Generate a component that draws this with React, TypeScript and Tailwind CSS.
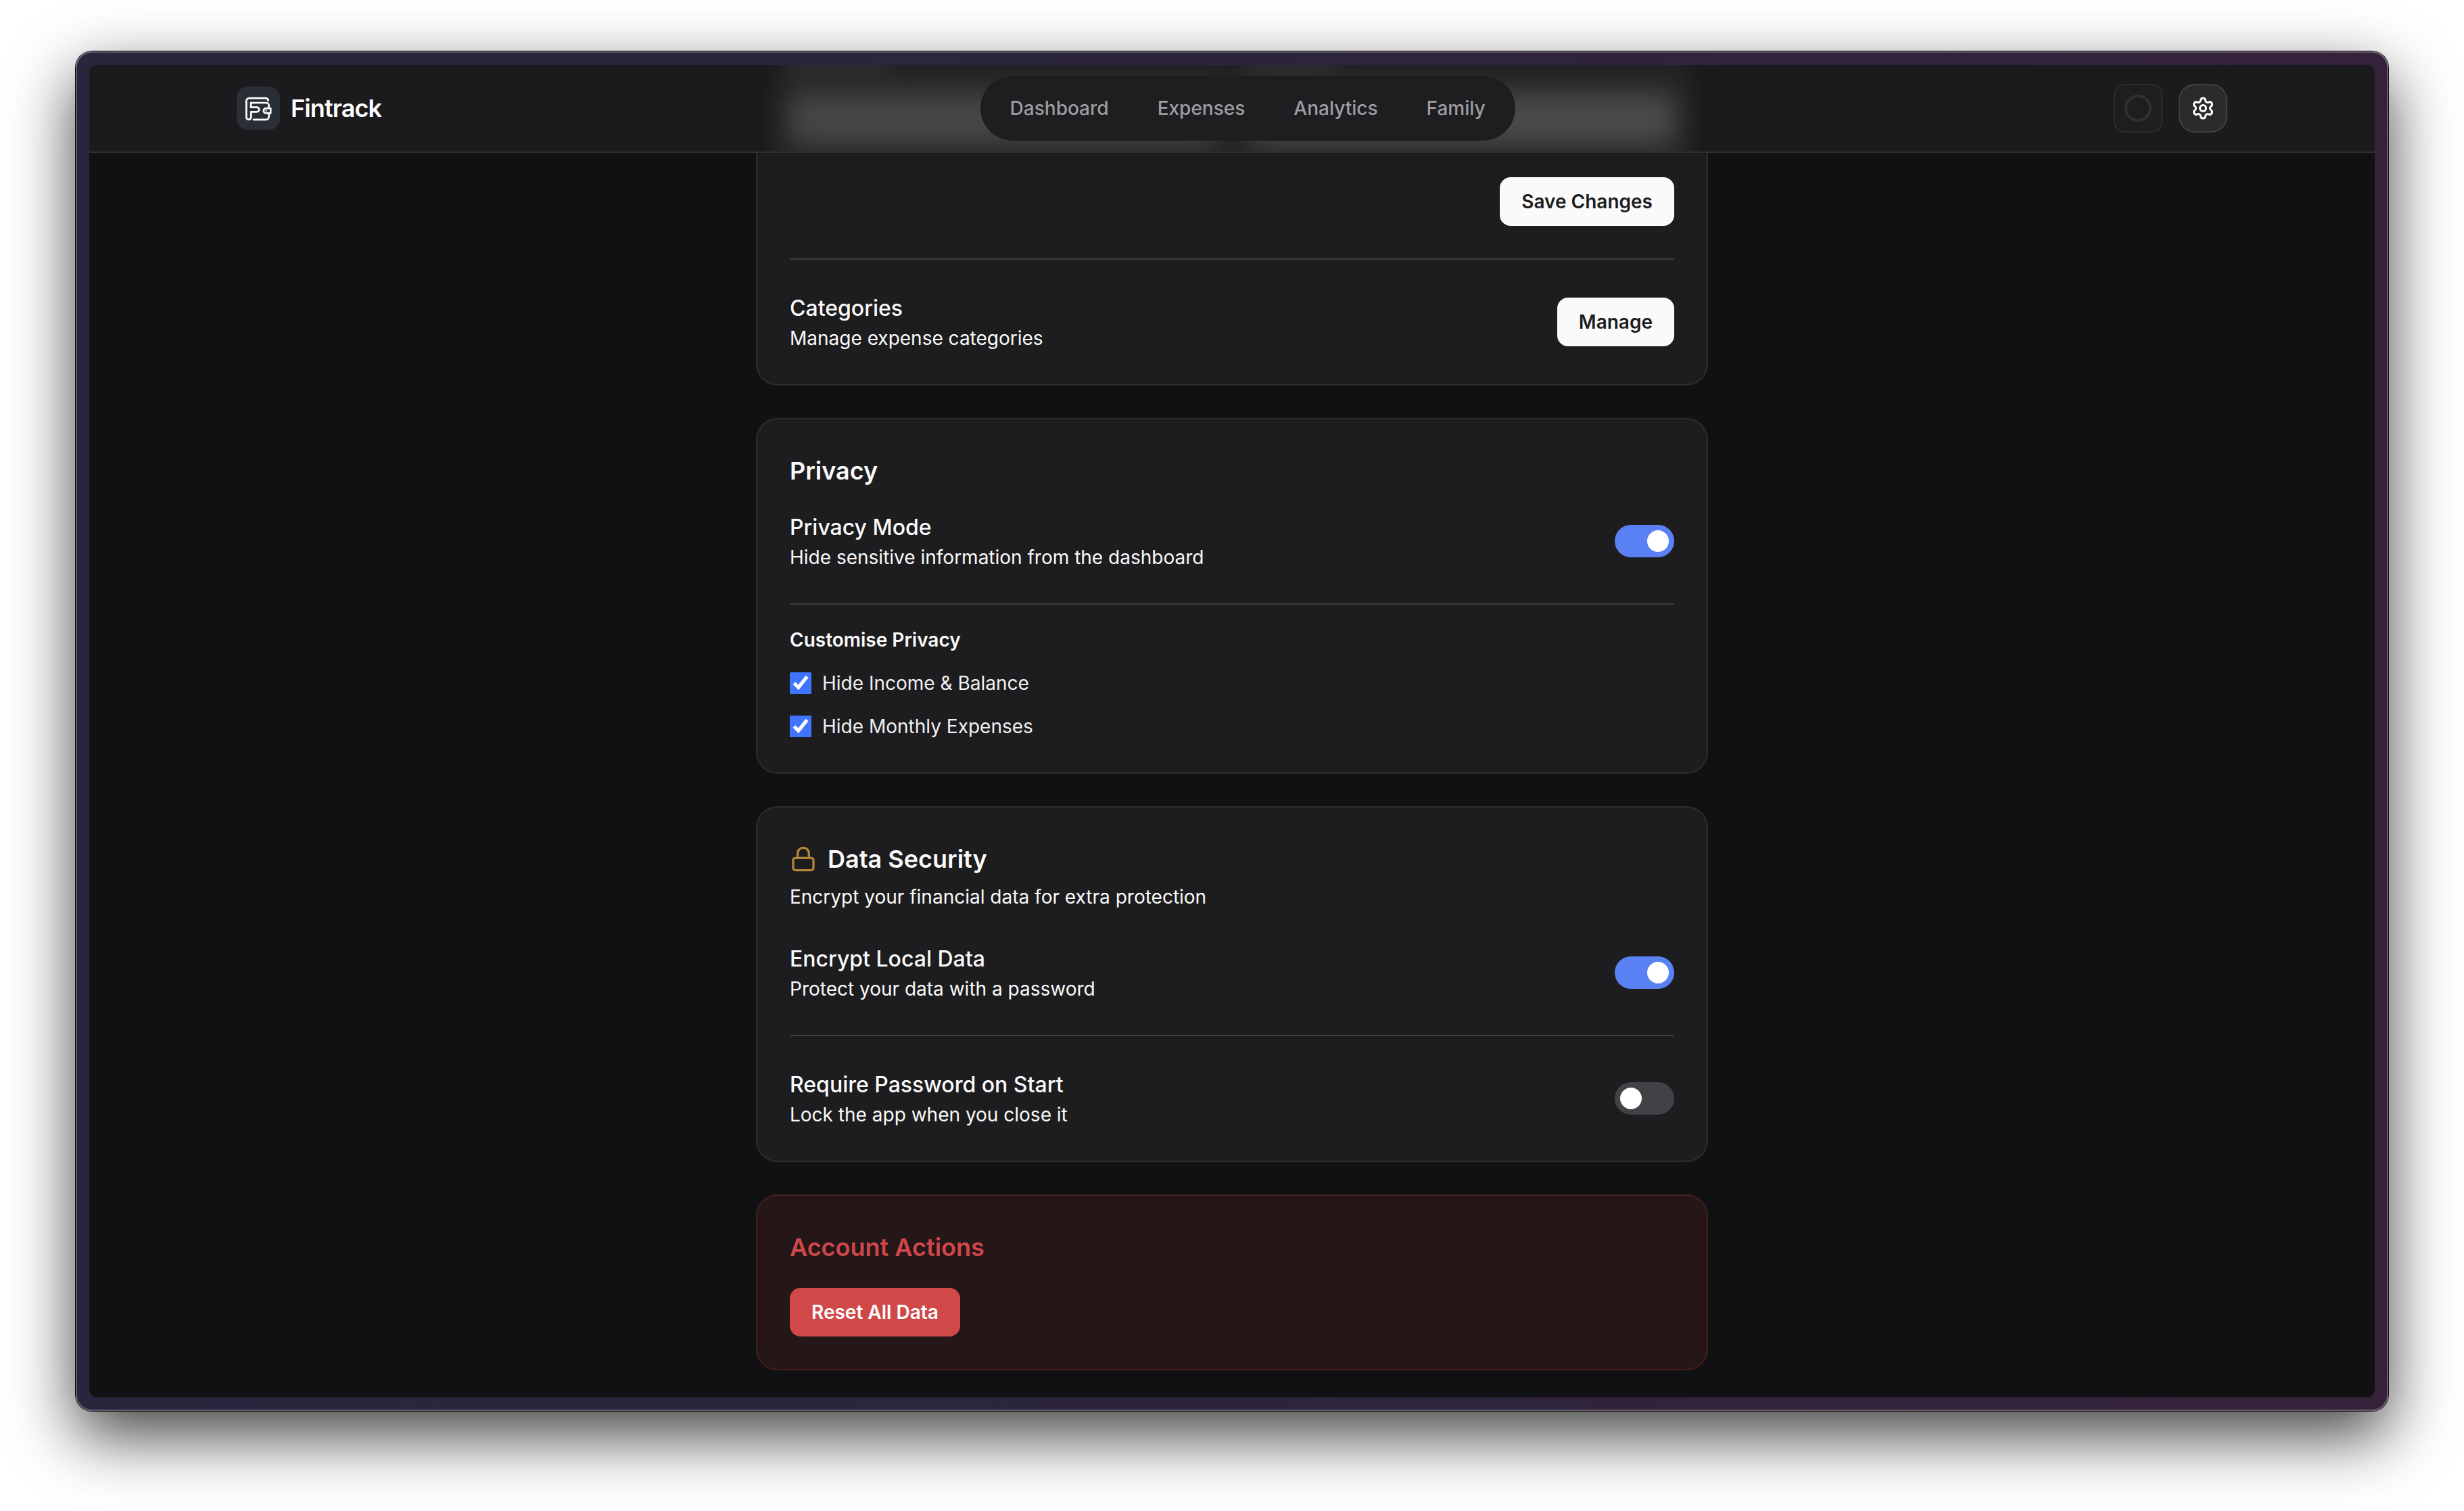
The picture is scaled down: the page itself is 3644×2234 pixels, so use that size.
import { ReactNode, useId, useState } from "react";
import clsx from "clsx";
import { Lock, Settings } from "lucide-react";

const NAV_LINKS = [
  { label: "Dashboard", href: "#dashboard" },
  { label: "Expenses", href: "#expenses" },
  { label: "Analytics", href: "#analytics" },
  { label: "Family", href: "#family" },
];

function Logo() {
  return (
    <svg
      viewBox="0 0 64 64"
      className="size-16 shrink-0 rounded-2xl bg-[#2a2f35]"
      fill="none"
      stroke="#fff"
      strokeWidth="2.7"
      strokeLinecap="round"
      strokeLinejoin="round"
      aria-hidden="true"
    >
      {/* wallet back and F stem */}
      <path d="M46.6 21v-.4a3.4 3.4 0 0 0-3.4-3.4H18.3a4 4 0 0 0-4 4V45.200a3.500 3.500 0 0 0 7 0V37.300H30a3.300 3.300 0 0 0 0-6.600H21V24H43.600a4 4 0 0 1 4 4V31.500" />
      <path d="M47.6 39.5v5.3a4 4 0 0 1-4 4H25" />
      {/* clasp */}
      <path d="M50.2 32.2H43.4a3.600 3.600 0 0 0 0 7.200H50.200Z" />
      <circle cx="43.7" cy="35.8" r="1.2" fill="#fff" stroke="none" />
    </svg>
  );
}

function Header() {
  return (
    <header className="relative isolate overflow-hidden border-b-2 border-white/9 bg-[#1b1b1d]">
      {/* form fields scrolled under the translucent bar */}
      <div className="absolute inset-0 -z-10 flex justify-center" aria-hidden="true">
        <div className="relative w-full max-w-[1408px]">
          <div className="absolute -inset-y-10 inset-x-6 bg-[#222224] blur-lg" />
          <div className="absolute inset-x-12 -top-4 flex gap-12 blur-lg">
            <div className="flex-1">
              <div className="h-8 w-36 bg-[#303032]" />
            </div>
            <div className="flex-1">
              <div className="h-8 w-32 bg-[#303032]" />
            </div>
          </div>
          <div className="absolute inset-x-12 top-10 bottom-2 flex gap-12 blur-[20px]">
            <div className="flex-1 bg-[#474749]" />
            <div className="flex-1 bg-[#4b4b4d]" />
          </div>
        </div>
      </div>

      <div className="mx-auto flex h-32 w-full max-w-[3072px] items-center justify-between px-16">
        <a href="#home" className="flex items-center gap-4">
          <Logo />
          <span className="text-4xl font-semibold tracking-tight text-white">Fintrack</span>
        </a>

        <nav className="flex gap-2 rounded-full bg-[#1e1e21] p-3">
          {NAV_LINKS.map((link) => (
            <a
              key={link.label}
              href={link.href}
              className="rounded-full px-8 py-4 text-[28px] leading-10 font-medium text-[#9d9da1]"
            >
              {link.label}
            </a>
          ))}
        </nav>

        <div className="flex items-center gap-6">
          <button
            type="button"
            aria-label="Account"
            className="flex size-18 items-center justify-center rounded-2xl border-2 border-[#2d2d2f] bg-[#1e1e20]"
          >
            <span className="size-10 rounded-full border-4 border-[#303032]" />
          </button>
          <button
            type="button"
            aria-label="Settings"
            className="flex size-18 items-center justify-center rounded-3xl border-2 border-[#404042] bg-[#2b2b2d] text-white"
          >
            <Settings className="size-9" />
          </button>
        </div>
      </div>
    </header>
  );
}

function Card({ children, className }: { children: ReactNode; className?: string }) {
  return (
    <section className={clsx("border-2 px-12 pb-12", className)}>{children}</section>
  );
}

const CARD = "rounded-4xl border-[#2d2d2f] bg-[#1d1d1f] pt-12";

function Divider() {
  return <hr className="border-t-2 border-[#3e3e40]" />;
}

function Button({ children, danger = false }: { children: ReactNode; danger?: boolean }) {
  return (
    <button
      type="button"
      className={clsx(
        "rounded-2xl px-8 py-4 text-[28px] leading-10 font-semibold",
        danger ? "bg-[#d04848] text-white" : "bg-[#fafafa] text-[#1c1c1e]"
      )}
    >
      {children}
    </button>
  );
}

function SwitchRow({
  title,
  description,
  defaultOn = false,
}: {
  title: string;
  description: string;
  defaultOn?: boolean;
}) {
  const id = useId();
  const [on, setOn] = useState(defaultOn);

  return (
    <div className="flex items-center justify-between">
      <div>
        <label htmlFor={id} className="block text-[32px] leading-12 font-medium">
          {title}
        </label>
        <p className="text-[28px] leading-10">{description}</p>
      </div>
      <input
        id={id}
        type="checkbox"
        role="switch"
        checked={on}
        onChange={(e) => setOn(e.target.checked)}
        className={clsx(
          "flex h-12 w-22 shrink-0 appearance-none items-center rounded-full px-2 transition-colors",
          "before:size-8 before:rounded-full before:bg-white",
          on ? "justify-end bg-[#5981f3]" : "justify-start bg-[#424246]"
        )}
      />
    </div>
  );
}

function CheckRow({ label }: { label: string }) {
  const [checked, setChecked] = useState(true);

  return (
    <label className="flex items-center gap-4 text-[28px] leading-10 text-[#f0f0f2]">
      <input
        type="checkbox"
        checked={checked}
        onChange={(e) => setChecked(e.target.checked)}
        className="size-8 accent-[#3f74ff]"
      />
      {label}
    </label>
  );
}

function SectionTitle({ children }: { children: ReactNode }) {
  return <h2 className="text-4xl leading-14 font-semibold">{children}</h2>;
}

export default function App() {
  return (
    <div className="min-h-screen bg-white px-28 pt-[76px] pb-[148px] font-[Inter,sans-serif] text-[#fafafa]">
      <div className="rounded-3xl border-2 border-white/25 bg-linear-to-r from-[#27263d] via-[#2c243d] to-[#35223a] bg-origin-border p-[18px] shadow-[0_0_0_1px_#0a0a0c,0_36px_96px_rgba(0,0,0,0.75)]">
        <div className="overflow-hidden rounded-xl bg-[#111113]">
          <Header />

          <main className="mx-auto flex w-full max-w-[1408px] flex-col gap-12 pb-10">
            <Card className="rounded-b-4xl border-t-0 border-[#2d2d2f] bg-[#1d1d1f] pt-9">
              <div className="mb-12 flex justify-end">
                <Button>Save Changes</Button>
              </div>
              <Divider />
              <div className="mt-12 flex items-center justify-between">
                <div>
                  <h3 className="text-[32px] leading-12 font-medium">Categories</h3>
                  <p className="text-[28px] leading-10">Manage expense categories</p>
                </div>
                <Button>Manage</Button>
              </div>
            </Card>

            <Card className={CARD}>
              <SectionTitle>Privacy</SectionTitle>
              <div className="mt-8 mb-12">
                <SwitchRow
                  title="Privacy Mode"
                  description="Hide sensitive information from the dashboard"
                  defaultOn
                />
              </div>
              <Divider />
              <h3 className="mt-8 text-[28px] leading-10 font-semibold">Customise Privacy</h3>
              <div className="mt-6 flex flex-col gap-6">
                <CheckRow label="Hide Income & Balance" />
                <CheckRow label="Hide Monthly Expenses" />
              </div>
            </Card>

            <Card className={CARD}>
              <div className="flex items-center gap-4">
                <Lock className="size-10 text-[#b08639]" />
                <SectionTitle>Data Security</SectionTitle>
              </div>
              <p className="mt-2 text-[28px] leading-10">
                Encrypt your financial data for extra protection
              </p>
              <div className="my-12">
                <SwitchRow
                  title="Encrypt Local Data"
                  description="Protect your data with a password"
                  defaultOn
                />
              </div>
              <Divider />
              <div className="mt-12">
                <SwitchRow
                  title="Require Password on Start"
                  description="Lock the app when you close it"
                />
              </div>
            </Card>

            <Card className="rounded-4xl border-[#471e21] bg-[#251618] pt-12">
              <h2 className="mb-8 text-4xl leading-14 font-semibold text-[#cf474a]">
                Account Actions
              </h2>
              <Button danger>Reset All Data</Button>
            </Card>
          </main>
        </div>
      </div>
    </div>
  );
}
